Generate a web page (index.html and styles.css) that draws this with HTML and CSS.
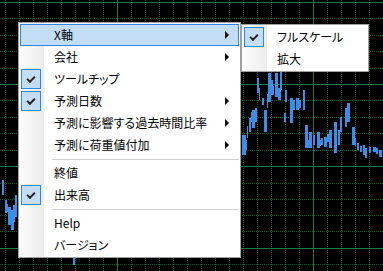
FILE: index.html
```html
<!DOCTYPE html>
<html lang="ja">
<head>
  <meta charset="UTF-8" />
  <title>チャート メニュー</title>
  <link rel="stylesheet" href="styles.css">
</head>
<body>
  <div class="chart">
    <svg class="plot" width="383" height="271" viewBox="0 0 383 271">
      <defs>
        <pattern id="vdots" x="5" y="0" width="14" height="2" patternUnits="userSpaceOnUse">
          <rect x="0" y="0" width="1" height="1" fill="#0f5a2e" />
        </pattern>
      </defs>
      <rect width="383" height="271" fill="url(#vdots)" />
      <g class="hdots" stroke="#0f5a2e" stroke-dasharray="1 1">
        <line x1="0" y1="18.5" x2="383" y2="18.5" />
        <line x1="0" y1="35.5" x2="383" y2="35.5" />
        <line x1="0" y1="51.5" x2="383" y2="51.5" />
        <line x1="0" y1="68.5" x2="383" y2="68.5" />
        <line x1="0" y1="100.5" x2="383" y2="100.5" />
        <line x1="0" y1="117.5" x2="383" y2="117.5" />
        <line x1="0" y1="133.5" x2="383" y2="133.5" />
        <line x1="0" y1="150.5" x2="383" y2="150.5" />
        <line x1="0" y1="183.5" x2="383" y2="183.5" />
        <line x1="0" y1="199.5" x2="383" y2="199.5" />
        <line x1="0" y1="215.5" x2="383" y2="215.5" />
        <line x1="0" y1="231.5" x2="383" y2="231.5" />
        <line x1="0" y1="264.5" x2="383" y2="264.5" />
      </g>
      <g stroke="#1b7d44">
        <line x1="0" y1="2.5" x2="383" y2="2.5" />
        <line x1="0" y1="84.5" x2="383" y2="84.5" />
        <line x1="0" y1="166.5" x2="383" y2="166.5" />
        <line x1="0" y1="248.5" x2="383" y2="248.5" />
        <line x1="117.5" y1="0" x2="117.5" y2="271" />
        <line x1="313.5" y1="0" x2="313.5" y2="271" />
      </g>
      <g fill="#3b8de5">
        <rect x="2" y="180" width="2" height="15" />
        <rect x="5" y="200" width="2" height="13" />
        <rect x="7" y="204" width="1" height="8" />
        <rect x="8" y="207" width="3" height="18" />
        <rect x="11" y="210" width="3" height="20" />
        <rect x="13" y="205" width="2" height="17" />
        <rect x="15" y="195" width="2" height="22" />
        <rect x="73" y="258" width="2" height="7" />
        <rect x="242" y="135" width="4" height="20" />
        <rect x="246" y="140" width="1" height="10" />
        <rect x="247" y="126" width="1" height="12" />
        <rect x="249" y="118" width="2" height="14" />
        <rect x="251" y="112" width="1" height="10" />
        <rect x="252" y="110" width="3" height="18" />
        <rect x="255" y="108" width="2" height="14" />
        <rect x="257" y="78" width="2" height="15" />
        <rect x="259" y="88" width="1" height="12" />
        <rect x="262" y="98" width="2" height="7" />
        <rect x="264" y="110" width="3" height="22" />
        <rect x="267" y="94" width="1" height="14" />
        <rect x="268" y="73" width="3" height="29" />
        <rect x="271" y="80" width="2" height="15" />
        <rect x="273" y="86" width="1" height="9" />
        <rect x="275" y="73" width="3" height="24" />
        <rect x="278" y="88" width="3" height="12" />
        <rect x="280" y="72" width="2" height="18" />
        <rect x="285" y="90" width="2" height="12" />
        <rect x="284" y="113" width="2" height="9" />
        <rect x="290" y="98" width="3" height="25" />
        <rect x="293" y="100" width="2" height="10" />
        <rect x="296" y="98" width="3" height="12" />
        <rect x="299" y="100" width="2" height="8" />
        <rect x="303" y="90" width="2" height="20" />
        <rect x="305" y="125" width="3" height="23" />
        <rect x="308" y="140" width="1" height="8" />
        <rect x="309" y="132" width="3" height="16" />
        <rect x="313" y="135" width="2" height="10" />
        <rect x="317" y="132" width="3" height="16" />
        <rect x="320" y="140" width="1" height="6" />
        <rect x="321" y="138" width="2" height="7" />
        <rect x="324" y="137" width="3" height="10" />
        <rect x="327" y="134" width="2" height="8" />
        <rect x="329" y="130" width="3" height="18" />
        <rect x="334" y="122" width="3" height="31" />
        <rect x="338" y="130" width="2" height="15" />
        <rect x="340" y="117" width="2" height="15" />
        <rect x="345" y="108" width="2" height="19" />
        <rect x="347" y="103" width="3" height="19" />
        <rect x="352" y="127" width="3" height="18" />
        <rect x="355" y="138" width="1" height="8" />
        <rect x="357" y="143" width="2" height="7" />
        <rect x="360" y="146" width="2" height="6" />
        <rect x="363" y="145" width="2" height="10" />
        <rect x="365" y="148" width="2" height="10" />
        <rect x="369" y="147" width="2" height="6" />
        <rect x="373" y="147" width="3" height="5" />
        <rect x="376" y="148" width="2" height="6" />
        <rect x="379" y="150" width="3" height="7" />
      </g>
    </svg>

    <div class="menu menu-main">
      <div class="item active">
        <span class="mark"></span><span class="label">X軸</span><span class="arrow"></span>
      </div>
      <div class="item">
        <span class="mark"></span><span class="label">会社</span><span class="arrow"></span>
      </div>
      <div class="item">
        <span class="mark checked"></span><span class="label">ツールチップ</span>
      </div>
      <div class="item">
        <span class="mark checked"></span><span class="label">予測日数</span><span class="arrow"></span>
      </div>
      <div class="item">
        <span class="mark"></span><span class="label">予測に影響する過去時間比率</span><span class="arrow"></span>
      </div>
      <div class="item">
        <span class="mark"></span><span class="label">予測に荷重値付加</span><span class="arrow"></span>
      </div>
      <div class="sep"></div>
      <div class="item">
        <span class="mark"></span><span class="label">終値</span>
      </div>
      <div class="item">
        <span class="mark checked"></span><span class="label">出来高</span>
      </div>
      <div class="sep"></div>
      <div class="item">
        <span class="mark"></span><span class="label">Help</span>
      </div>
      <div class="item">
        <span class="mark"></span><span class="label">バージョン</span>
      </div>
    </div>

    <div class="menu menu-sub">
      <div class="item">
        <span class="mark checked"></span><span class="label">フルスケール</span>
      </div>
      <div class="item">
        <span class="mark"></span><span class="label">拡大</span>
      </div>
    </div>
  </div>
</body>
</html>
```

FILE: styles.css
```css
* {
  margin: 0;
  padding: 0;
  box-sizing: border-box;
}

body {
  background: #000;
  font-family: "Noto Sans CJK JP", "Noto Sans", sans-serif;
  font-size: 12px;
  color: #000;
}

.chart {
  position: relative;
  width: 383px;
  height: 271px;
  overflow: hidden;
  background: #000;
}

.plot {
  display: block;
}

/* context menus float over the chart */
.menu {
  position: absolute;
  background: #fff;
  border: 1px solid #a0a0a0;
  padding: 1px;
}

.menu::before {
  content: "";
  position: absolute;
  left: 0;
  top: 0;
  bottom: 0;
  width: 25px;
  background: linear-gradient(to right, #fdfdfd, #ececec);
}

.menu-main {
  left: 18px;
  top: 22px;
  width: 223px;
}

.menu-sub {
  left: 241px;
  top: 24px;
  width: 128px;
}

.item {
  position: relative;
  display: flex;
  align-items: center;
  height: 22px;
  border: 1px solid transparent;
  line-height: 20px;
  font-feature-settings: "palt";
}

.item.active {
  background: #c2ddf5;
  border-color: #2f86de;
}

.mark {
  width: 20px;
  height: 20px;
  flex: none;
  border: 1px solid transparent;
  display: flex;
  align-items: center;
  justify-content: center;
}

.mark.checked {
  background: #c2ddf5;
  border-color: #2f86de;
}

.mark.checked::after {
  content: "";
  width: 6px;
  height: 3px;
  border-left: 2px solid #222;
  border-bottom: 2px solid #222;
  transform: rotate(-45deg);
  margin-top: -2px;
}

.label {
  margin-left: 13px;
  white-space: nowrap;
}

.arrow {
  margin-left: auto;
  margin-right: 9px;
  width: 0;
  height: 0;
  border-top: 4px solid transparent;
  border-bottom: 4px solid transparent;
  border-left: 4px solid #000;
}

.sep {
  position: relative;
  height: 6px;
}

.sep::after {
  content: "";
  position: absolute;
  left: 32px;
  right: 0;
  top: 3px;
  border-top: 1px solid #d0d0d0;
}
```
